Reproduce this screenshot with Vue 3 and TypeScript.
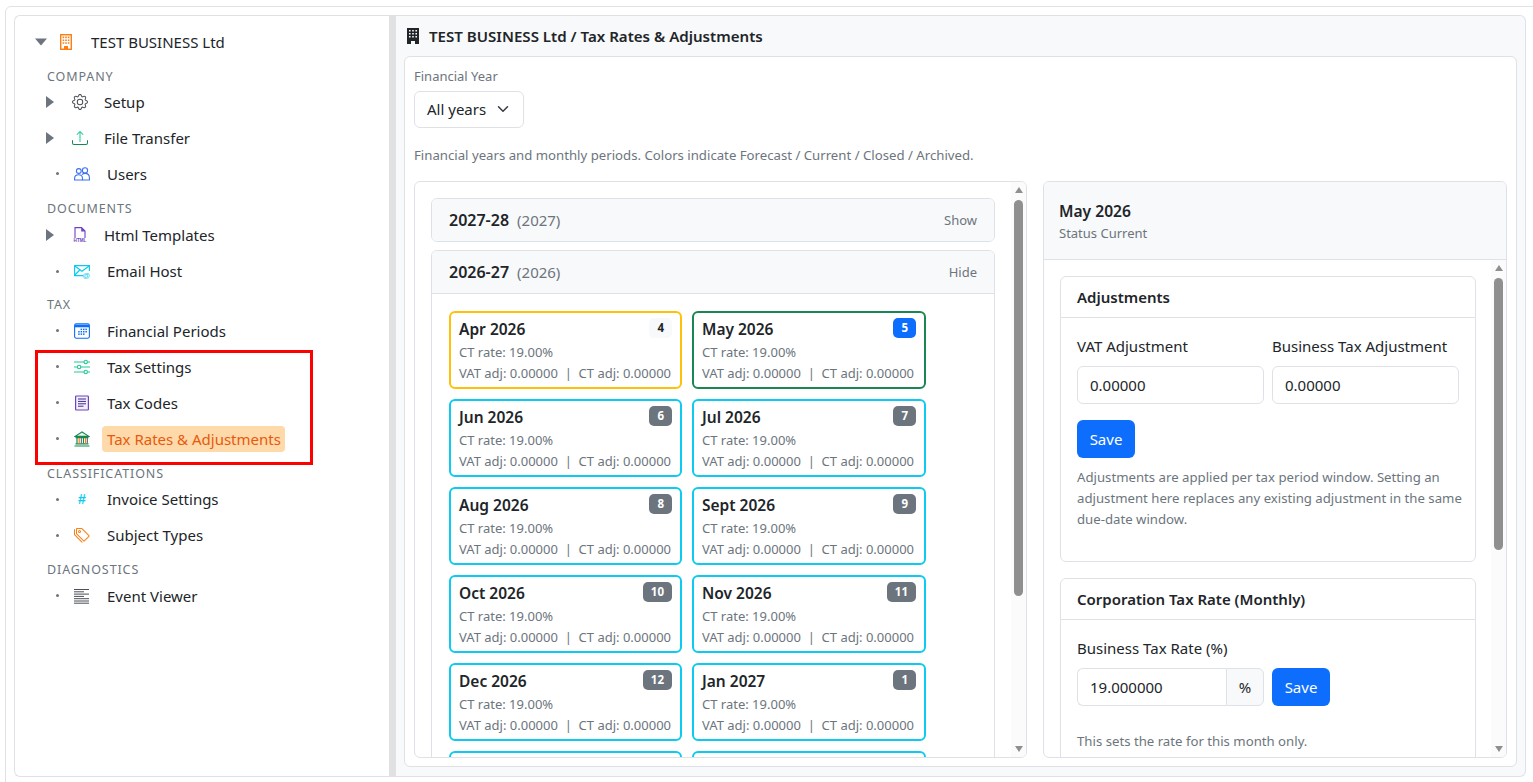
<script setup lang="ts">
type Row = { label: string; icon: string; arrow?: boolean; active?: boolean }
type Section = { title: string; rows: Row[] }

const icons: Record<string, string> = {
  gear: `<g fill="#495057"><path d="M8 4.754a3.246 3.246 0 1 0 0 6.492 3.246 3.246 0 0 0 0-6.492zM5.754 8a2.246 2.246 0 1 1 4.492 0 2.246 2.246 0 0 1-4.492 0z"/><path d="M9.796 1.343c-.527-1.79-3.065-1.79-3.592 0l-.094.319a.873.873 0 0 1-1.255.52l-.292-.16c-1.64-.892-3.433.902-2.54 2.541l.159.292a.873.873 0 0 1-.52 1.255l-.319.094c-1.79.527-1.79 3.065 0 3.592l.319.094a.873.873 0 0 1 .52 1.255l-.16.292c-.892 1.64.901 3.434 2.541 2.54l.292-.159a.873.873 0 0 1 1.255.52l.094.319c.527 1.79 3.065 1.79 3.592 0l.094-.319a.873.873 0 0 1 1.255-.52l.292.16c1.64.893 3.434-.902 2.54-2.541l-.159-.292a.873.873 0 0 1 .52-1.255l.319-.094c1.79-.527 1.79-3.065 0-3.592l-.319-.094a.873.873 0 0 1-.52-1.255l.16-.292c.893-1.64-.902-3.433-2.541-2.54l-.292.159a.873.873 0 0 1-1.255-.52l-.094-.319zm-2.633.283c.246-.835 1.428-.835 1.674 0l.094.319a1.873 1.873 0 0 0 2.693 1.115l.291-.16c.764-.415 1.6.42 1.184 1.185l-.159.292a1.873 1.873 0 0 0 1.116 2.692l.318.094c.835.246.835 1.428 0 1.674l-.319.094a1.873 1.873 0 0 0-1.115 2.693l.16.291c.415.764-.42 1.6-1.185 1.184l-.291-.159a1.873 1.873 0 0 0-2.693 1.116l-.094.318c-.246.835-1.428.835-1.674 0l-.094-.319a1.873 1.873 0 0 0-2.692-1.115l-.292.16c-.764.415-1.6-.42-1.184-1.185l.159-.291A1.873 1.873 0 0 0 1.945 8.93l-.319-.094c-.835-.246-.835-1.428 0-1.674l.319-.094A1.873 1.873 0 0 0 3.06 4.377l-.16-.292c-.415-.764.42-1.6 1.185-1.184l.292.159a1.873 1.873 0 0 0 2.692-1.115l.094-.319z"/></g>`,
  upload: `<path fill="#198754" d="M.5 9.9a.5.5 0 0 1 .5.5v2.5a1 1 0 0 0 1 1h12a1 1 0 0 0 1-1v-2.5a.5.5 0 0 1 1 0v2.5a2 2 0 0 1-2 2H2a2 2 0 0 1-2-2v-2.5a.5.5 0 0 1 .5-.5z"/><path fill="#20c997" d="M7.646 1.146a.5.5 0 0 1 .708 0l3 3a.5.5 0 0 1-.708.708L8.5 2.707V11.5a.5.5 0 0 1-1 0V2.707L5.354 4.854a.5.5 0 1 1-.708-.708l3-3z"/>`,
  users: `<g fill="none" stroke="#3d6ff0" stroke-width="1.1"><circle cx="4.8" cy="5" r="2.4"/><circle cx="11" cy="4.4" r="2.6"/><path d="M.6 14v-1.6c0-2.2 1.6-3.6 4-3.6 2.3 0 3.9 1.4 3.9 3.6V14z"/><path d="M8 8.6c.8-.8 1.9-1.2 3-1.2 2.6 0 4.4 1.8 4.4 4.2V14H8.5"/></g>`,
  html: `<path fill="none" stroke="#6f42c1" stroke-width="1.1" d="M3 11V.6h6.6L13 4V11"/><path fill="#6f42c1" d="M9.2.5l4 4h-4z"/><text x="8" y="15.4" text-anchor="middle" font-family="Liberation Sans" font-weight="700" font-size="4.6" fill="#6f42c1">HTML</text>`,
  mail: `<g fill="none" stroke="#0dcaf0" stroke-width="1.2"><path d="M9 12.6H.6V2.6h14.8V8"/><path d="M.8 2.9l7.2 5.4 7.2-5.4M.8 12l5-5"/></g><text x="12.2" y="15.4" text-anchor="middle" font-family="Liberation Sans" font-weight="700" font-size="7.5" fill="#0dcaf0">@</text>`,
  calendar: `<rect x=".6" y=".8" width="14.8" height="14.4" rx="1.6" fill="#fff" stroke="#0d6efd" stroke-width="1.1"/><path fill="#0d6efd" d="M1 1.5h14v2.8H1z"/><g fill="#0d6efd"><rect x="6.6" y="5.6" width="1.5" height="1.5"/><rect x="9" y="5.6" width="1.5" height="1.5"/><rect x="11.4" y="5.6" width="1.5" height="1.5"/><rect x="4.2" y="8" width="1.5" height="1.5"/><rect x="6.6" y="8" width="1.5" height="1.5"/><rect x="9" y="8" width="1.5" height="1.5"/><rect x="11.4" y="8" width="1.5" height="1.5"/><rect x="4.2" y="10.4" width="1.5" height="1.5"/><rect x="6.6" y="10.4" width="1.5" height="1.5"/><rect x="9" y="10.4" width="1.5" height="1.5"/></g>`,
  sliders: `<g fill="#fff" stroke="#20c997" stroke-width="1.1"><path d="M0 3h10M13.4 3H16M0 8h3.4M6.8 8H16M0 13h10M13.4 13H16"/><circle cx="11.7" cy="3" r="1.7"/><circle cx="5.1" cy="8" r="1.7"/><circle cx="11.7" cy="13" r="1.7"/></g>`,
  codes: `<rect x="1.6" y="1" width="12.8" height="14" rx=".8" fill="#f3eefb" stroke="#6f42c1" stroke-width="1.2"/><path stroke="#3d2a8c" stroke-width="1" d="M4 4h8M4 6.4h8M4 8.8h8M4 11.2h5.5"/>`,
  bank: `<g fill="none" stroke="#198754" stroke-width="1.1"><path d="M1 5.4L8 1l7 4.4z" fill="#e8f5ee"/><path d="M1.5 6.6h13M1.5 12.9h13M.5 15h15"/></g><g stroke-width="1.2"><path stroke="#198754" d="M3 7v5.6M9.5 7v5.6"/><path stroke="#fd7e14" d="M5.2 7v5.6M11.6 7v5.6"/><path stroke="#6c757d" d="M7.4 7v5.6M13.4 7v5.6"/></g>`,
  tags: `<g fill="#fd7e14"><path d="M3 2v4.586l7 7L14.586 9l-7-7H3zM2 2a1 1 0 0 1 1-1h4.586a1 1 0 0 1 .707.293l7 7a1 1 0 0 1 0 1.414l-4.586 4.586a1 1 0 0 1-1.414 0l-7-7A1 1 0 0 1 2 6.586V2z"/><path d="M5.5 5a.5.5 0 1 1 0-1 .5.5 0 0 1 0 1zm0 1a1.5 1.5 0 1 0 0-3 1.5 1.5 0 0 0 0 3zM1 7.086a1 1 0 0 0 .293.707L8.75 15.25l-.043.043a1 1 0 0 1-1.414 0l-7-7A1 1 0 0 1 0 7.586V3a1 1 0 0 1 1-1v5.086z"/></g>`,
  events: `<path stroke="#495057" stroke-width="1" d="M0 1.5h15M0 3.8h10M0 6.1h15M0 8.4h10M0 10.7h15M0 13h15M0 15.2h15" />`,
}

const sections: Section[] = [
  { title: 'Company', rows: [
    { label: 'Setup', icon: 'gear', arrow: true },
    { label: 'File Transfer', icon: 'upload', arrow: true },
    { label: 'Users', icon: 'users' },
  ] },
  { title: 'Documents', rows: [
    { label: 'Html Templates', icon: 'html', arrow: true },
    { label: 'Email Host', icon: 'mail' },
  ] },
  { title: 'Tax', rows: [
    { label: 'Financial Periods', icon: 'calendar' },
    { label: 'Tax Settings', icon: 'sliders' },
    { label: 'Tax Codes', icon: 'codes' },
    { label: 'Tax Rates & Adjustments', icon: 'bank', active: true },
  ] },
  { title: 'Classifications', rows: [
    { label: 'Invoice Settings', icon: 'hash' },
    { label: 'Subject Types', icon: 'tags' },
  ] },
  { title: 'Diagnostics', rows: [
    { label: 'Event Viewer', icon: 'events' },
  ] },
]

type Month = { name: string; n: number; state: 'forecast' | 'current' | 'closed' }
const months: Month[] = [
  { name: 'Apr 2026', n: 4, state: 'closed' },
  { name: 'May 2026', n: 5, state: 'current' },
  { name: 'Jun 2026', n: 6, state: 'forecast' },
  { name: 'Jul 2026', n: 7, state: 'forecast' },
  { name: 'Aug 2026', n: 8, state: 'forecast' },
  { name: 'Sept 2026', n: 9, state: 'forecast' },
  { name: 'Oct 2026', n: 10, state: 'forecast' },
  { name: 'Nov 2026', n: 11, state: 'forecast' },
  { name: 'Dec 2026', n: 12, state: 'forecast' },
  { name: 'Jan 2027', n: 1, state: 'forecast' },
  { name: 'Feb 2027', n: 2, state: 'forecast' },
  { name: 'Mar 2027', n: 3, state: 'forecast' },
]
</script>

<template>
  <div class="shell">
    <div class="panels">
      <aside class="sidebar">
        <div class="root-row">
          <svg class="caret-down" width="12" height="8" viewBox="0 0 12 8"><path d="M0 .5h12L6 7.5z" fill="#6c757d" /></svg>
          <svg class="root-icon" width="12" height="16" viewBox="0 0 12 16">
            <rect x=".7" y=".7" width="10.6" height="14.6" fill="#fff" stroke="#fd7e14" stroke-width="1.4" />
            <path fill="#fd7e14" d="M2.6 2.6h1.6v1.6H2.6zM5.2 2.6h1.6v1.6H5.2zM7.8 2.6h1.6v1.6H7.8zM2.6 5.4h1.6V7H2.6zM5.2 5.4h1.6V7H5.2zM7.8 5.4h1.6V7H7.8zM2.6 8.2h1.6v1.6H2.6zM5.2 8.2h1.6v1.6H5.2zM7.8 8.2h1.6v1.6H7.8zM4 12h4v3.4H4z" />
          </svg>
          <span>TEST BUSINESS Ltd</span>
        </div>
        <section v-for="s in sections" :key="s.title">
          <div class="sec-title">{{ s.title }}</div>
          <div v-for="r in s.rows" :key="r.label" class="row" :class="{ 'has-arrow': r.arrow }">
            <svg v-if="r.arrow" class="caret-right" width="8" height="12" viewBox="0 0 8 12"><path d="M0 0l8 6-8 6z" fill="#6c757d" /></svg>
            <i v-else class="dot"></i>
            <span v-if="r.icon === 'hash'" class="icon hash">#</span>
            <svg v-else class="icon" width="16" height="16" viewBox="0 0 16 16" v-html="icons[r.icon]"></svg>
            <span class="row-label" :class="{ active: r.active }">{{ r.label }}</span>
          </div>
        </section>
        <div class="annotation"></div>
      </aside>

      <div class="splitter"></div>

      <main class="main">
        <header class="main-head">
          <svg width="12" height="16" viewBox="0 0 12 16">
            <path fill="#212529" fill-rule="evenodd" d="M0 0h12v16H8v-3H4v3H0zM2 2v1.6h1.6V2zM5.2 2v1.6h1.6V2zM8.4 2v1.6H10V2zM2 5v1.6h1.6V5zM5.2 5v1.6h1.6V5zM8.4 5v1.6H10V5zM2 8v1.6h1.6V8zM5.2 8v1.6h1.6V8zM8.4 8v1.6H10V8z" />
          </svg>
          <span>TEST BUSINESS Ltd / Tax Rates &amp; Adjustments</span>
        </header>

        <div class="main-card">
          <label class="fy-label">Financial Year</label>
          <div class="select">
            <span>All years</span>
            <svg width="12" height="12" viewBox="0 0 16 16"><path fill="none" stroke="#343a40" stroke-width="2" stroke-linecap="round" stroke-linejoin="round" d="M2 5l6 6 6-6" /></svg>
          </div>
          <p class="hint">Financial years and monthly periods. Colors indicate Forecast / Current / Closed / Archived.</p>

          <div class="panes">
            <div class="pane list-pane">
              <div class="year collapsed">
                <div class="year-head">
                  <span><b>2027-28</b><em>(2027)</em></span>
                  <small>Show</small>
                </div>
              </div>
              <div class="year">
                <div class="year-head open">
                  <span><b>2026-27</b><em>(2026)</em></span>
                  <small>Hide</small>
                </div>
                <div class="month-grid">
                  <div v-for="m in months" :key="m.name" class="month" :class="m.state">
                    <div class="month-top">
                      <strong>{{ m.name }}</strong>
                      <span class="badge">{{ m.n }}</span>
                    </div>
                    <div class="month-line">CT rate: 19.00%</div>
                    <div class="month-line">VAT adj: 0.00000 &nbsp;|&nbsp; CT adj: 0.00000</div>
                  </div>
                </div>
              </div>
              <div class="track">
                <i class="arr up"></i>
                <i class="thumb list-thumb"></i>
                <i class="arr down"></i>
              </div>
            </div>

            <div class="pane detail-pane">
              <div class="detail-head">
                <strong>May 2026</strong>
                <span>Status Current</span>
              </div>
              <div class="detail-body">
                <div class="card">
                  <div class="card-head">Adjustments</div>
                  <div class="card-body">
                    <div class="two">
                      <div>
                        <label>VAT Adjustment</label>
                        <input class="input" value="0.00000" readonly />
                      </div>
                      <div>
                        <label>Business Tax Adjustment</label>
                        <input class="input" value="0.00000" readonly />
                      </div>
                    </div>
                    <button class="btn save-top">Save</button>
                    <p class="help">Adjustments are applied per tax period window. Setting an<br />adjustment here replaces any existing adjustment in the same<br />due-date window.</p>
                  </div>
                </div>
                <div class="card">
                  <div class="card-head">Corporation Tax Rate (Monthly)</div>
                  <div class="card-body">
                    <label>Business Tax Rate (%)</label>
                    <div class="rate-row">
                      <div class="group">
                        <input class="input" value="19.000000" readonly />
                        <span class="addon">%</span>
                      </div>
                      <button class="btn">Save</button>
                    </div>
                    <p class="help rate-help">This sets the rate for this month only.</p>
                  </div>
                </div>
                <div class="track">
                  <i class="arr up"></i>
                  <i class="thumb detail-thumb"></i>
                  <i class="arr down"></i>
                </div>
              </div>
            </div>
          </div>
        </div>
      </main>
    </div>
  </div>
</template>

<style>
html, body { margin: 0; height: 100%; overflow: hidden; background: #fff; }
</style>

<style scoped>
.shell {
  box-sizing: border-box;
  margin: 6px 0 0 5px;
  width: 1540px;
  height: 790px;
  padding: 8px;
  border: 1px solid #dee2e6;
  border-radius: 6px;
  font-family: "Noto Sans", "Open Sans", sans-serif;
  font-size: 15px;
  color: #212529;
}
.panels { display: flex; width: 1512px; height: 762px; }

.sidebar {
  position: relative;
  box-sizing: border-box;
  width: 375px;
  padding-top: 8px;
  border: 1px solid #dee2e6;
  border-right: 0;
  border-radius: 6px 0 0 6px;
  background: #fff;
}
.root-row { display: flex; align-items: center; height: 35px; padding-left: 20px; }
.caret-down { margin-right: 13px; }
.root-icon { margin-right: 19px; }
.sec-title {
  box-sizing: border-box;
  height: 24.5px;
  padding: 8px 0 0 32px;
  line-height: 17px;
  font-size: 12.5px;
  letter-spacing: .9px;
  text-transform: uppercase;
  color: #6c757d;
}
.root-row + section .sec-title { padding-top: 9px; }
section:nth-of-type(2) .sec-title { height: 25.5px; }
section:nth-of-type(3) .sec-title { height: 23.5px; padding-top: 7px; }
.row { display: flex; align-items: center; height: 36px; padding-left: 31px; }
.caret-right { margin-right: 18px; flex: none; }
.dot { width: 3px; height: 3px; margin: 0 15px 0 10px; border-radius: 50%; background: #6c757d; flex: none; }
.icon { flex: none; }
.row .icon + .row-label { margin-left: 12px; }
.has-arrow .icon + .row-label { margin-left: 11px; }
.hash {
  width: 16px;
  text-align: center;
  font: 700 14px "Liberation Sans", sans-serif;
  color: #0dcaf0;
}
.row-label { padding: 2px 5px; line-height: 22px; border-radius: 4px; white-space: nowrap; }
.row-label.active { padding-right: 4px; background: #fed9aa; color: #e8590c; }
.annotation {
  position: absolute;
  left: 20px;
  top: 334px;
  width: 272px;
  height: 109px;
  border: 3px solid #f00;
  pointer-events: none;
}

.splitter { width: 7px; background: #e1e1e1; flex: none; }

.main {
  flex: 1;
  display: flex;
  flex-direction: column;
  min-width: 0;
  box-sizing: border-box;
  padding: 0 8px 9px 8px;
  border: 1px solid #dee2e6;
  border-left: 0;
  border-radius: 0 6px 6px 0;
  background: #f8f9fa;
}
.main-head {
  display: flex;
  align-items: center;
  gap: 10px;
  height: 40px;
  padding: 0 0 0 3px;
  box-sizing: border-box;
  font-size: 15.1px;
  font-weight: 600;
}
.main-card {
  flex: 1;
  min-height: 0;
  display: flex;
  flex-direction: column;
  align-items: flex-start;
  box-sizing: border-box;
  padding: 9px 9px 8px;
  background: #fff;
  border: 1px solid #dee2e6;
  border-radius: 6px;
}
.fy-label { height: 20px; line-height: 20px; font-size: 13px; color: #6c757d; }
.select {
  box-sizing: border-box;
  display: flex;
  align-items: center;
  justify-content: space-between;
  width: 110px;
  height: 37px;
  margin-top: 5px;
  padding: 0 14px 2px 12px;
  border: 1px solid #dee2e6;
  border-radius: 6px;
}
.hint { margin: 17px 0 16px; height: 20px; line-height: 20px; font-size: 13.2px; color: #6c757d; white-space: nowrap; }

.panes { flex: 1; min-height: 0; width: 100%; display: flex; gap: 16px; }
.pane {
  position: relative;
  box-sizing: border-box;
  border: 1px solid #dee2e6;
  border-radius: 6px;
  overflow: hidden;
}
.list-pane { width: 613px; padding: 16px 31px 0 16px; }
.detail-pane { width: 464px; display: flex; flex-direction: column; }

.track {
  position: absolute;
  top: 0;
  right: 0;
  bottom: 0;
  width: 15px;
  background: #fbfbfb;
}
.arr { position: absolute; left: 4px; width: 0; height: 0; border-left: 4px solid transparent; border-right: 4px solid transparent; }
.arr.up { top: 5px; border-bottom: 6px solid #8f8f8f; }
.arr.down { bottom: 5px; border-top: 6px solid #8f8f8f; }
.thumb { position: absolute; left: 3px; width: 9px; border-radius: 5px; background: #8f8f8f; }
.list-thumb { top: 18px; height: 396px; }
.detail-thumb { top: 18px; height: 272px; }

.year { border: 1px solid #dee2e6; border-radius: 6px; margin-bottom: 8px; overflow: hidden; }
.year-head {
  box-sizing: border-box;
  display: flex;
  align-items: center;
  justify-content: space-between;
  height: 42px;
  padding: 0 17px;
  background: #f8f9fa;
}
.year-head.open { height: 43px; border-bottom: 1px solid #dee2e6; }
.year-head b { font-weight: 600; font-size: 16px; }
.year-head em { margin-left: 8px; font-style: normal; font-weight: 400; color: #6c757d; }
.year-head small { font-size: 13px; color: #6c757d; }
.month-grid {
  display: grid;
  grid-template-columns: 233px 234px;
  gap: 10px;
  padding: 17px;
}
.month {
  box-sizing: border-box;
  height: 78px;
  padding: 4px 8px;
  border: 2px solid #0dcaf0;
  border-radius: 6px;
  font-size: 13px;
  color: #6c757d;
}
.month.closed { border-color: #ffc107; }
.month.current { border-color: #198754; }
.month-top { display: flex; justify-content: space-between; align-items: flex-start; height: 25px; }
.month-top strong { font-size: 15.5px; font-weight: 600; line-height: 24px; color: #212529; }
.month-line { height: 21px; line-height: 21px; white-space: nowrap; }
.badge {
  box-sizing: border-box;
  min-width: 22px;
  height: 20px;
  margin-top: 1px;
  padding: 0 8px;
  border-radius: 5px;
  background: #6c757d;
  color: #fff;
  font-size: 11.5px;
  font-weight: 700;
  line-height: 20px;
  text-align: center;
}
.closed .badge { background: #f8f9fa; color: #212529; }
.current .badge { background: #0d6efd; }

.detail-head {
  flex: none;
  box-sizing: border-box;
  display: flex;
  flex-direction: column;
  justify-content: center;
  height: 78px;
  padding: 2px 15px 0;
  background: #f8f9fa;
  border-bottom: 1px solid #dee2e6;
}
.detail-head strong { font-weight: 600; font-size: 15.6px; line-height: 23px; }
.detail-head span { font-size: 13px; line-height: 20px; color: #6c757d; }
.detail-body {
  position: relative;
  flex: 1;
  min-height: 0;
  overflow: hidden;
  padding: 16px 30px 0 16px;
}
.card { border: 1px solid #dee2e6; border-radius: 6px; margin-bottom: 16px; }
.card-head {
  box-sizing: border-box;
  height: 41px;
  padding: 0 16px;
  line-height: 40px;
  font-weight: 600;
  border-bottom: 1px solid #dee2e6;
}
.card-body { padding: 16px; }
.two { display: grid; grid-template-columns: 187px 187px; gap: 8px; }
label { display: block; line-height: 24px; margin-bottom: 8px; white-space: nowrap; }
.main-card > .fy-label { margin: 0; }
.input {
  box-sizing: border-box;
  display: block;
  width: 100%;
  height: 38px;
  padding: 0 12px;
  font: inherit;
  color: #212529;
  border: 1px solid #dee2e6;
  border-radius: 6px;
  background: #fff;
  outline: none;
}
.btn {
  display: block;
  box-sizing: border-box;
  width: 58px;
  height: 38px;
  padding: 0;
  font: inherit;
  color: #fff;
  background: #0d6efd;
  border: 0;
  border-radius: 6px;
}
.save-top { margin-top: 16px; }
.help { margin: 9px 0 15px; font-size: 13.2px; line-height: 21px; color: #6c757d; white-space: nowrap; }
.rate-row { display: flex; gap: 8px; }
.group { display: flex; width: 187px; }
.group .input { flex: 1; min-width: 0; border-radius: 6px 0 0 6px; border-right: 0; }
.addon {
  box-sizing: border-box;
  width: 38px;
  height: 38px;
  line-height: 36px;
  text-align: center;
  background: #f8f9fa;
  border: 1px solid #dee2e6;
  border-radius: 0 6px 6px 0;
}
.rate-help { margin-top: 25px; }
</style>
